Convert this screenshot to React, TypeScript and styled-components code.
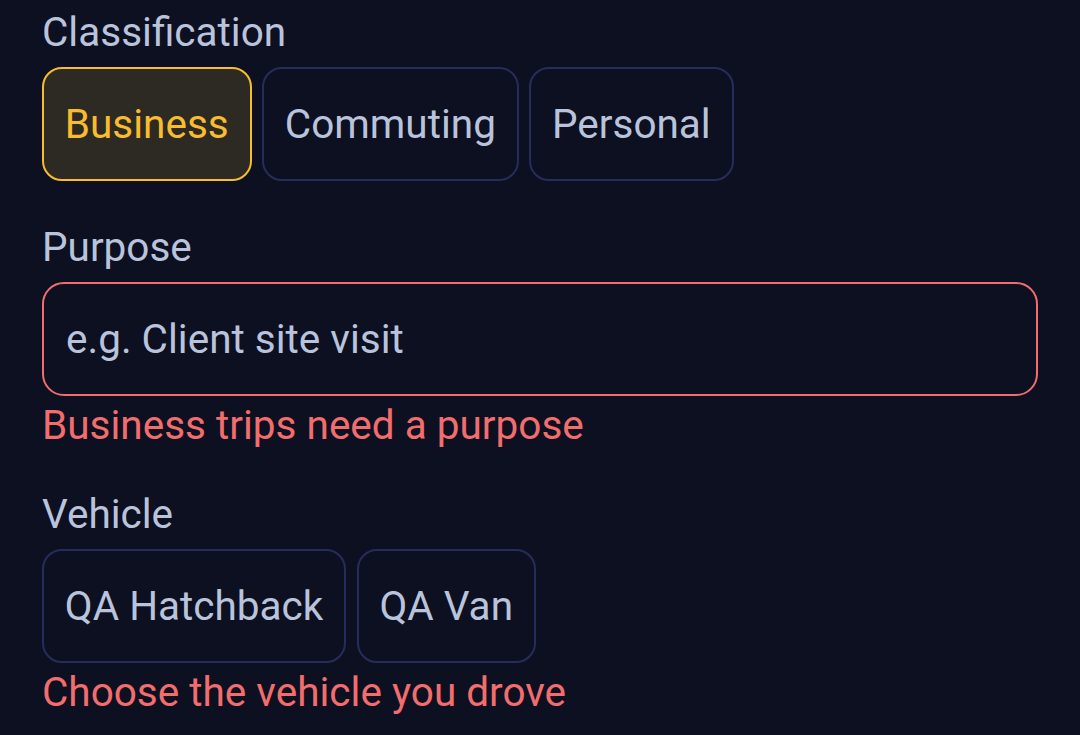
import React from "react";
import styled, { createGlobalStyle } from "styled-components";

const GlobalStyle = createGlobalStyle`
  html, body {
    margin: 0;
    padding: 0;
    background: #0d1020;
  }
  body {
    font-family: Roboto, "Noto Sans", "Liberation Sans", sans-serif;
    -webkit-font-smoothing: antialiased;
  }
`;

const Page = styled.div`
  min-height: 735px;
  box-sizing: border-box;
  padding: 9px 42px 0 42px;
  display: flex;
  flex-direction: column;
  gap: 43px;
  background: #0d1020;
`;

const Field = styled.div`
  display: flex;
  flex-direction: column;
`;

const Label = styled.div`
  font-size: 40.5px;
  line-height: 46px;
  color: #b9c4dc;
  margin-bottom: 12px;
`;

const ChipRow = styled.div`
  display: flex;
  gap: 10.5px;
`;

const Chip = styled.button<{ $active?: boolean }>`
  box-sizing: border-box;
  height: 114px;
  padding: 0 20.8px;
  margin: 0;
  border-radius: 20px;
  border: 2px solid ${(p) => (p.$active ? "#f7bd2e" : "#262d5c")};
  background: ${(p) => (p.$active ? "#2d2a24" : "#0d1020")};
  color: ${(p) => (p.$active ? "#f7bd2e" : "#b9c4dc")};
  font-family: inherit;
  font-size: 40.5px;
  line-height: 46px;
  cursor: pointer;
`;

const Input = styled.input<{ $invalid?: boolean }>`
  box-sizing: border-box;
  width: 100%;
  height: 114px;
  padding: 0 22px;
  margin: 0;
  border-radius: 22px;
  border: 2px solid ${(p) => (p.$invalid ? "#f26d6d" : "#262d5c")};
  background: #0d1020;
  color: #b9c4dc;
  font-family: inherit;
  font-size: 40.5px;
  outline: none;
  &::placeholder {
    color: #b9c4dc;
    opacity: 1;
  }
`;

const ErrorText = styled.div`
  font-size: 40.5px;
  line-height: 46px;
  color: #f26d6d;
  margin-top: 6px;
`;

export default function App() {
  const classifications = ["Business", "Commuting", "Personal"];
  const vehicles = ["QA Hatchback", "QA Van"];
  return (
    <>
      <GlobalStyle />
      <Page>
        <Field>
          <Label>Classification</Label>
          <ChipRow>
            {classifications.map((c) => (
              <Chip key={c} $active={c === "Business"}>
                {c}
              </Chip>
            ))}
          </ChipRow>
        </Field>
        <Field>
          <Label>Purpose</Label>
          <Input $invalid placeholder="e.g. Client site visit" />
          <ErrorText>Business trips need a purpose</ErrorText>
        </Field>
        <Field>
          <Label>Vehicle</Label>
          <ChipRow>
            {vehicles.map((v) => (
              <Chip key={v}>{v}</Chip>
            ))}
          </ChipRow>
          <ErrorText>Choose the vehicle you drove</ErrorText>
        </Field>
      </Page>
    </>
  );
}
